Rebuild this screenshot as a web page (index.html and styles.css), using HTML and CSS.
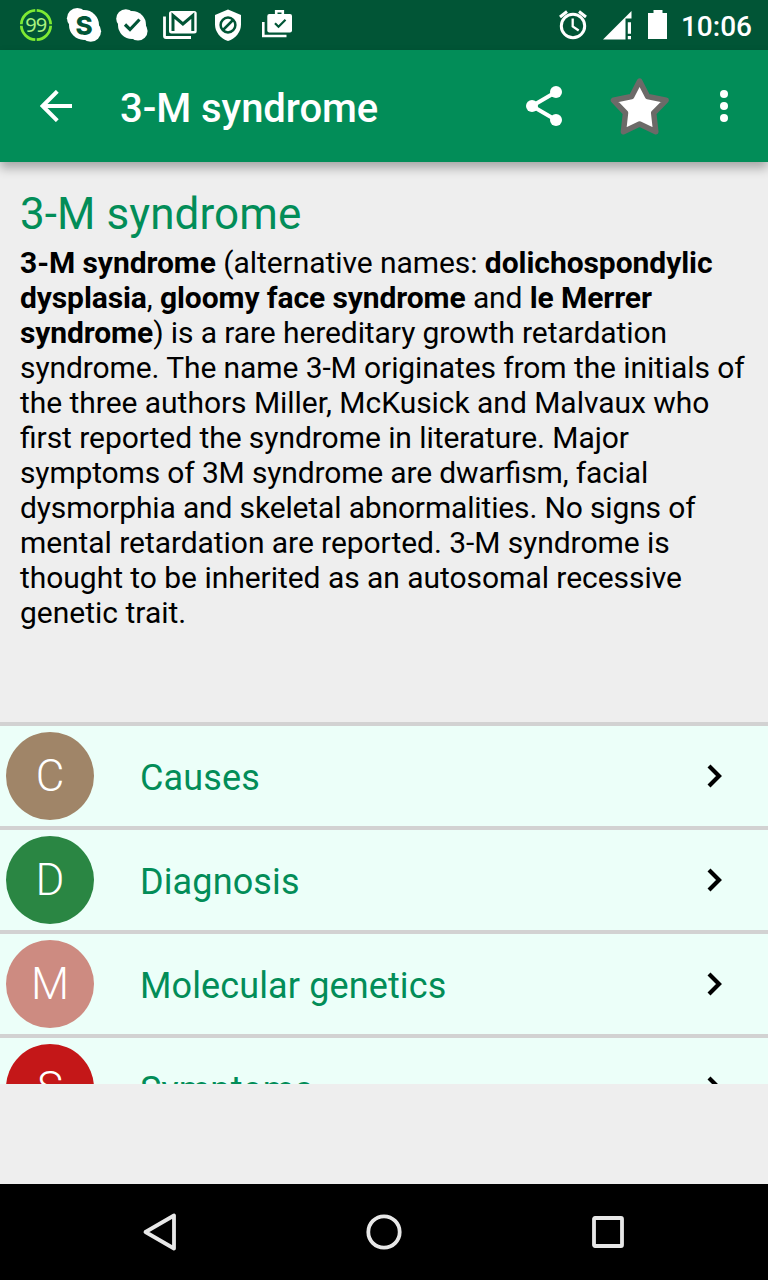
FILE: index.html
```html
<!DOCTYPE html>
<html lang="en">
<head>
<meta charset="utf-8">
<title>3-M syndrome</title>
<link rel="stylesheet" href="styles.css">
</head>
<body>
<div class="screen">
  <div class="status-bar">
    <div class="status-left">
      <svg class="slot" viewBox="0 0 48 50"><g fill="none" stroke="#7eea33" stroke-width="2.8"><path d="M24.700 10.300A14.800 14.800 0 0 1 38.700 24.300M38.700 25.700A14.800 14.800 0 0 1 24.700 39.700M23.300 39.700A14.800 14.800 0 0 1 9.300 25.700M9.300 24.300A14.800 14.800 0 0 1 23.300 10.300"/></g><text class="badge-text" x="23.700" y="32" text-anchor="middle">99</text></svg>
      <svg class="slot" viewBox="0 0 48 50"><g fill="#fff"><circle cx="24" cy="25" r="15"/><circle cx="17.300" cy="18.300" r="10.400"/><circle cx="30.700" cy="31.300" r="10.400"/></g><text class="skype-letter" x="24" y="34.500" text-anchor="middle">S</text></svg>
      <svg class="slot" viewBox="0 0 48 50"><g fill="#fff"><circle cx="24" cy="25" r="14"/><circle cx="17.800" cy="18.800" r="9.600"/><circle cx="30" cy="31" r="9.600"/></g><path d="M17 24.500l5 5L31.500 19.500" fill="none" stroke="#015536" stroke-width="3.200"/></svg>
      <svg class="slot" viewBox="0 0 48 50"><rect x="13" y="11" width="27.700" height="22.500" rx="2.500" fill="#fff"/><path d="M8.500 16.500v19.500q0 1.500 1.500 1.500h25" fill="none" stroke="#fff" stroke-width="2.800"/><path d="M17 31V15.500l9.900 8.500 9.900-8.500V31" fill="none" stroke="#015536" stroke-width="3"/></svg>
      <svg class="slot" viewBox="0 0 48 50"><path d="M24 9.500l13 5.500v9.500c0 7.500-5.500 14-13 16.500-7.500-2.500-13-9-13-16.500V15z" fill="#fff"/><g fill="none" stroke="#015536" stroke-width="2.500"><circle cx="24" cy="25" r="7.400"/><path d="M19 30L29 20"/></g></svg>
      <svg class="slot" viewBox="0 0 48 50"><path d="M17.300 14h20.700q2 0 2 2v14.500q0 2-2 2H17.300q-2 0-2-2V16q0-2 2-2z" fill="#fff"/><path d="M24.200 14v-2.700h6.600V14M11.300 22v14H34.500" fill="none" stroke="#fff" stroke-width="2.600"/><path d="M23 23.200l3.500 3.500 7-7" fill="none" stroke="#015536" stroke-width="2.200"/></svg>
    </div>
    <div class="status-right">
      <svg class="alarm" viewBox="0 0 30 50"><g fill="none" stroke="#fff" stroke-width="3"><circle cx="15" cy="26" r="11.700"/><path d="M2 17l7-5.500M28 17l-7-5.500"/><path d="M14.700 18.500v8l6 4" stroke-width="2.300"/></g></svg>
      <svg class="signal" viewBox="0 0 30 50"><path d="M0 39.500L28.500 11v7.500H22.500v21z" fill="#fff"/><path d="M24.800 22.300h3.200v11.500h-3.200zM24.800 36h3.200v3.300h-3.200z" fill="#fff"/></svg>
      <svg class="battery" viewBox="0 0 20 50"><path d="M1 13h4.500v-3h9v3H19v26H0V13z" fill="#fff"/></svg>
      <span class="clock">10:06</span>
    </div>
  </div>

  <header class="app-bar">
    <svg class="back" viewBox="0 0 32 32"><path d="M32 16H3M17.300 1.300L2.600 16l14.700 14.700" fill="none" stroke="#fff" stroke-width="4"/></svg>
    <h1 class="app-title">3-M syndrome</h1>
    <svg class="share" viewBox="0 0 36 40"><path d="M30 6L6 20l24 14" fill="none" stroke="#fff" stroke-width="4"/><g fill="#fff"><circle cx="30" cy="6" r="6"/><circle cx="6" cy="20" r="6"/><circle cx="30" cy="34" r="6"/></g></svg>
    <svg class="star" viewBox="0 0 60 60"><path d="M29.600 5L37.600 20.500L56.100 24.300L43.700 37L45.800 55.700L29.600 48L13.400 55.700L15.500 37L3.500 24.300L21.600 20.500Z" fill="#fff" stroke="#6c6a68" stroke-width="5.500" stroke-linejoin="round"/></svg>
    <svg class="more" viewBox="0 0 8 32"><g fill="#fff"><circle cx="4" cy="4" r="4"/><circle cx="4" cy="16" r="4"/><circle cx="4" cy="28" r="4"/></g></svg>
  </header>

  <main class="content">
    <article class="article">
      <h2 class="heading">3-M syndrome</h2>
      <p class="summary">
        <span class="line snug"><b>3-M syndrome</b> (alternative names: <b>dolichospondylic</b></span>
        <span class="line tight"><b>dysplasia</b>, <b>gloomy face syndrome</b> and <b>le Merrer</b></span>
        <span class="line tight"><b>syndrome</b>) is a rare hereditary growth retardation</span>
        <span class="line tight">syndrome. The name 3-M originates from the initials of</span>
        <span class="line soft">the three authors Miller, McKusick and Malvaux who</span>
        <span class="line snug">first reported the syndrome in literature. Major</span>
        <span class="line tighter">symptoms of 3M syndrome are dwarfism, facial</span>
        <span class="line tighter">dysmorphia and skeletal abnormalities. No signs of</span>
        <span class="line snug">mental retardation are reported. 3-M syndrome is</span>
        <span class="line soft">thought to be inherited as an autosomal recessive</span>
        <span class="line">genetic trait.</span>
      </p>
    </article>
    <ul class="sections">
      <li class="row"><span class="avatar causes">C</span><span class="label">Causes</span><svg class="chevron" viewBox="0 0 16 24"><path d="M2 2l10 10L2 22"/></svg></li>
      <li class="row"><span class="avatar diagnosis">D</span><span class="label">Diagnosis</span><svg class="chevron" viewBox="0 0 16 24"><path d="M2 2l10 10L2 22"/></svg></li>
      <li class="row"><span class="avatar genetics">M</span><span class="label">Molecular genetics</span><svg class="chevron" viewBox="0 0 16 24"><path d="M2 2l10 10L2 22"/></svg></li>
      <li class="row"><span class="avatar symptoms">S</span><span class="label">Symptoms</span><svg class="chevron" viewBox="0 0 16 24"><path d="M2 2l10 10L2 22"/></svg></li>
    </ul>
  </main>

  <nav class="nav-bar">
    <svg class="nav-icon" viewBox="0 0 40 40"><path d="M34 3.500v33L5.500 20z"/></svg>
    <svg class="nav-icon" viewBox="0 0 40 40"><circle cx="20" cy="20" r="15.700"/></svg>
    <svg class="nav-icon" viewBox="0 0 40 40"><rect x="6" y="6" width="28" height="28" rx="1"/></svg>
  </nav>
</div>
</body>
</html>
```

FILE: styles.css
```css
* { box-sizing: border-box; }
body { margin: 0; font-family: Roboto, "Noto Sans", sans-serif; }
svg { display: block; flex: none; }
.screen {
  width: 768px;
  height: 1280px;
  display: flex;
  flex-direction: column;
  background: #eee;
  overflow: hidden;
}
.status-bar {
  height: 50px;
  flex: none;
  display: flex;
  justify-content: space-between;
  padding: 0 16px 0 12px;
  background: #015536;
}
.status-left, .status-right { display: flex; align-items: center; }
.slot { width: 48px; height: 50px; }
.badge-text { font: 20px "Noto Sans", sans-serif; letter-spacing: -1px; fill: #a9f27d; }
.skype-letter { font: 800 26px Inter, Roboto, sans-serif; fill: #015536; }
.alarm { width: 30px; height: 50px; margin-right: 15px; }
.signal { width: 30px; height: 50px; margin-right: 15px; }
.battery { width: 20px; height: 50px; margin-right: 13px; }
.clock {
  color: #fff;
  font-size: 28px;
  font-weight: 500;
  line-height: 50px;
  padding-top: 3px;
}
.app-bar {
  height: 112px;
  flex: none;
  display: flex;
  align-items: center;
  padding: 0 40px;
  background: #028d58;
  box-shadow: 0 6px 10px rgba(0, 0, 0, .3);
  z-index: 1;
}
.back { width: 32px; height: 32px; }
.app-title {
  flex: 1;
  margin: 0 0 0 48px;
  padding-top: 4px;
  color: #fff;
  font-size: 40px;
  font-weight: 500;
  letter-spacing: -.05px;
}
.share { width: 36px; height: 40px; margin-right: 48px; }
.star { width: 60px; height: 60px; margin-right: 50px; }
.more { width: 8px; height: 32px; }
.content {
  height: 922px;
  flex: none;
  display: flex;
  flex-direction: column;
  overflow: hidden;
}
.article { height: 560px; flex: none; padding: 26px 0 0 20px; }
.heading {
  margin: 0;
  color: #028d58;
  font-size: 44px;
  font-weight: 400;
  line-height: 52px;
  letter-spacing: .08px;
}
.summary {
  margin: 5px 0 0;
  color: #000;
  font-size: 30px;
  line-height: 35px;
  white-space: nowrap;
  font-feature-settings: "liga" 1;
}
.line { display: block; }
.soft { letter-spacing: -.035px; }
.snug { letter-spacing: -.06px; }
.tight { letter-spacing: -.095px; }
.tighter { letter-spacing: -.15px; }
.sections { margin: 0; padding: 0; list-style: none; }
.row {
  height: 104px;
  display: flex;
  align-items: center;
  padding: 0 45px 0 6px;
  border-top: 4px solid #d2d2d2;
  background: #ecfff9;
}
.avatar {
  width: 88px;
  height: 88px;
  border-radius: 50%;
  color: #fff;
  font-size: 44px;
  font-weight: 300;
  line-height: 88px;
  text-align: center;
}
.causes { background: #a08568; }
.diagnosis { background: #2a8643; }
.genetics { background: #cd8b81; }
.symptoms { background: #c41718; }
.label {
  flex: 1;
  margin-left: 46px;
  padding-top: 4px;
  color: #028d58;
  font-size: 36px;
  letter-spacing: .12px;
}
.chevron {
  width: 16px;
  height: 24px;
  fill: none;
  stroke: #000;
  stroke-width: 4.2;
}
.nav-bar {
  height: 96px;
  flex: none;
  margin-top: 100px;
  display: flex;
  align-items: center;
  justify-content: center;
  gap: 184px;
  background: #000;
}
.nav-icon {
  width: 40px;
  height: 40px;
  fill: none;
  stroke: #e8e8e8;
  stroke-width: 3.8;
  stroke-linejoin: round;
}
```
